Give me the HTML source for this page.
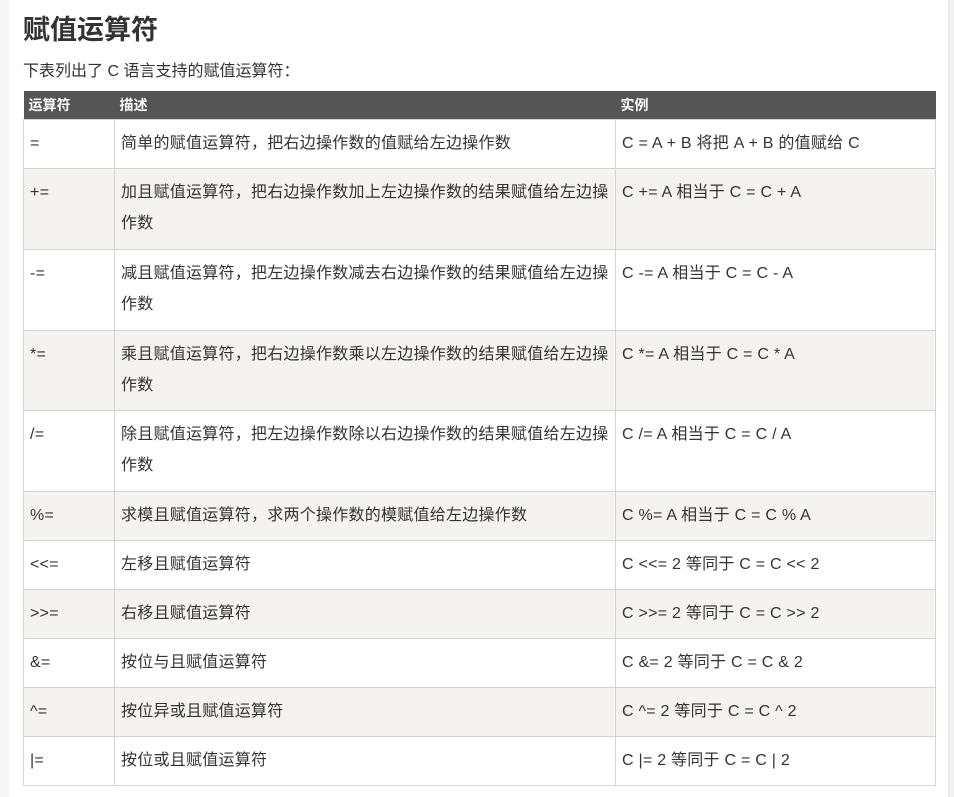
<!DOCTYPE html>
<html><head><meta charset="utf-8"><style>
body{margin:0;width:954px;height:797px;overflow:hidden;background:#f6f6f6;font-family:"Liberation Sans","Noto Sans CJK SC",sans-serif;color:#333;position:relative}
.main{position:absolute;left:9px;top:0;width:939px;height:797px;background:#fff}
.sb{position:absolute;left:948px;top:0;width:6px;height:797px;background:#f1f1f1;border-left:1px solid #e3e3e3}
h1{position:absolute;left:23px;top:10px;margin:0;font-size:27px;font-weight:bold;line-height:40px;color:#333}
p{position:absolute;left:23px;top:60px;margin:0;font-size:16px;line-height:24px}
table{position:absolute;left:23px;top:91px;width:913px;border-collapse:collapse;font-size:16px;table-layout:fixed}
th{background:#555;color:#fff;text-align:left;font-size:14px;font-weight:bold;height:28px;padding:0 5px;line-height:28px}
td{border:1px solid #d4d4d4;padding:8px 6px 9px;line-height:31px;vertical-align:top;white-space:nowrap;overflow:hidden;letter-spacing:0.25px}
tr.d td{padding-bottom:9.75px}
tr:nth-child(odd) td{background:#f4f3ef}
</style></head><body>
<div class="main"></div><div class="sb"></div>
<h1>赋值运算符</h1>
<p>下表列出了 C 语言支持的赋值运算符：</p>
<table>
<colgroup><col style="width:91px"><col style="width:501px"><col style="width:320px"></colgroup>
<tr><th>运算符</th><th>描述</th><th>实例</th></tr>
<tr><td>=</td><td>简单的赋值运算符，把右边操作数的值赋给左边操作数</td><td>C = A + B 将把 A + B 的值赋给 C</td></tr>
<tr class="d"><td>+=</td><td>加且赋值运算符，把右边操作数加上左边操作数的结果赋值给左边操<br>作数</td><td>C += A 相当于 C = C + A</td></tr>
<tr class="d"><td>-=</td><td>减且赋值运算符，把左边操作数减去右边操作数的结果赋值给左边操<br>作数</td><td>C -= A 相当于 C = C - A</td></tr>
<tr class="d"><td>*=</td><td>乘且赋值运算符，把右边操作数乘以左边操作数的结果赋值给左边操<br>作数</td><td>C *= A 相当于 C = C * A</td></tr>
<tr class="d"><td>/=</td><td>除且赋值运算符，把左边操作数除以右边操作数的结果赋值给左边操<br>作数</td><td>C /= A 相当于 C = C / A</td></tr>
<tr><td>%=</td><td>求模且赋值运算符，求两个操作数的模赋值给左边操作数</td><td>C %= A 相当于 C = C % A</td></tr>
<tr><td>&lt;&lt;=</td><td>左移且赋值运算符</td><td>C &lt;&lt;= 2 等同于 C = C &lt;&lt; 2</td></tr>
<tr><td>&gt;&gt;=</td><td>右移且赋值运算符</td><td>C &gt;&gt;= 2 等同于 C = C &gt;&gt; 2</td></tr>
<tr><td>&amp;=</td><td>按位与且赋值运算符</td><td>C &amp;= 2 等同于 C = C &amp; 2</td></tr>
<tr><td>^=</td><td>按位异或且赋值运算符</td><td>C ^= 2 等同于 C = C ^ 2</td></tr>
<tr><td>|=</td><td>按位或且赋值运算符</td><td>C |= 2 等同于 C = C | 2</td></tr>
</table>
</body></html>
